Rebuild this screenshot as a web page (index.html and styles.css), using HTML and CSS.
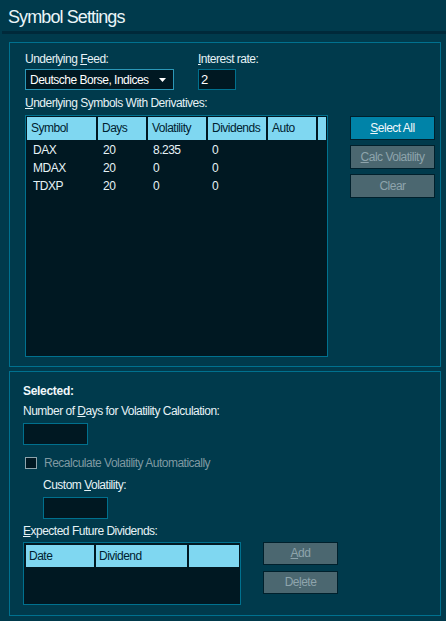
FILE: index.html
```html
<!DOCTYPE html>
<html>
<head>
<meta charset="utf-8">
<link rel="stylesheet" href="styles.css">
</head>
<body>
<div class="title">Symbol Settings</div>
<div class="title-rule"></div>

<section class="panel panel-top">
  <div class="row-top">
    <div class="field feed">
      <label class="lbl">Underlying <u>F</u>eed:</label>
      <div class="select">
        <span>Deutsche Borse, Indices</span>
        <svg class="arrow" width="7" height="4" viewBox="0 0 7 4"><path d="M0 0H7L3.5 4Z" fill="#ffffff"/></svg>
      </div>
    </div>
    <div class="field rate">
      <label class="lbl"><u>I</u>nterest rate:</label>
      <div class="input rate-input">2</div>
    </div>
  </div>
  <label class="lbl lbl-sym"><u>U</u>nderlying Symbols With Derivatives:</label>
  <div class="row-table">
    <div class="grid grid-sym">
      <div class="hdr">
        <div class="hc">Symbol</div>
        <div class="hc">Days</div>
        <div class="hc">Volatility</div>
        <div class="hc">Dividends</div>
        <div class="hc">Auto</div>
        <div class="hc"></div>
      </div>
      <div class="r"><span>DAX</span><span>20</span><span>8.235</span><span>0</span><span></span><span></span></div>
      <div class="r"><span>MDAX</span><span>20</span><span>0</span><span>0</span><span></span><span></span></div>
      <div class="r"><span>TDXP</span><span>20</span><span>0</span><span>0</span><span></span><span></span></div>
    </div>
    <div class="btns">
      <div class="btn btn-primary"><u>S</u>elect All</div>
      <div class="btn btn-off"><u>C</u>alc Volatility</div>
      <div class="btn btn-off">Clear</div>
    </div>
  </div>
</section>

<section class="panel panel-bottom">
  <div class="sel-title">Selected:</div>
  <label class="lbl lbl-days">Number of <u>D</u>ays for Volatility Calculation:</label>
  <div class="input days-input"></div>
  <div class="check-row">
    <span class="check"></span>
    <span class="check-lbl">Recalculate Volatility Automatically</span>
  </div>
  <div class="indent">
    <label class="lbl lbl-custom">Custom <u>V</u>olatility:</label>
    <div class="input custom-input"></div>
  </div>
  <label class="lbl lbl-div"><u>E</u>xpected Future Dividends:</label>
  <div class="row-div">
    <div class="grid grid-div">
      <div class="hdr hdr-div">
        <div class="hc">Date</div>
        <div class="hc">Dividend</div>
        <div class="hc"></div>
      </div>
    </div>
    <div class="btns btns-div">
      <div class="btn btn-off btn-small"><u>A</u>dd</div>
      <div class="btn btn-off btn-small">De<u>l</u>ete</div>
    </div>
  </div>
</section>
</body>
</html>
```

FILE: styles.css
```css
* { box-sizing: border-box; }
html, body { margin: 0; padding: 0; }
body {
  width: 446px;
  height: 621px;
  background: #003a4c;
  color: #e6f2f6;
  font-family: "Liberation Sans", Arial, sans-serif;
  font-size: 12px;
  letter-spacing: -0.5px;
  overflow: hidden;
}
u { text-decoration: underline; text-underline-offset: 1px; }

.title {
  height: 31px;
  padding: 6px 0 0 8px;
  font-size: 18px;
  letter-spacing: -0.9px;
  line-height: 22px;
  color: #eaf5f8;
}
.title-rule {
  margin-left: 2px;
  height: 3px;
  background: #00293a;
}

.panel {
  margin-left: 9px;
  width: 432px;
  border: 1px solid #00718f;
}
.panel-top {
  margin-top: 8px;
  height: 325px;
  padding: 9px 0 0 15px;
}
.panel-bottom {
  margin-top: 4px;
  height: 245px;
  padding: 12px 0 0 13px;
}

.lbl {
  display: block;
  line-height: 14px;
  color: #e6f2f6;
  white-space: nowrap;
}

.row-top { display: flex; gap: 24px; }
.field .lbl { margin-bottom: 3px; }
.select {
  width: 149px;
  height: 21px;
  border: 1px solid #2b98b8;
  background: #001822;
  display: flex;
  align-items: center;
  justify-content: space-between;
  padding: 1px 7px 0 4px;
  color: #ffffff;
  white-space: nowrap;
}
.input {
  height: 22px;
  border: 1px solid #00708e;
  background: #001822;
  color: #ffffff;
}
.rate-input {
  width: 38px;
  height: 21px;
  padding: 2px 0 0 2px;
  line-height: 15px;
  font-size: 13px;
}

.lbl-sym { margin-top: 6px; }

.row-table { display: flex; gap: 22px; margin-top: 5px; }
.grid {
  border: 1px solid #00718f;
  background: #001822;
}
.grid-sym { width: 303px; height: 242px; padding: 1px; }
.hdr {
  display: grid;
  grid-template-columns: 69px 48px 58px 58px 48px 8px;
  column-gap: 2px;
  height: 23px;
}
.hc {
  background: #7fd7f1;
  color: #002230;
  padding-left: 4px;
  line-height: 23px;
  white-space: nowrap;
}
.r {
  display: grid;
  grid-template-columns: 69px 48px 58px 58px 48px 8px;
  column-gap: 2px;
  height: 18px;
  line-height: 18px;
  color: #e6f2f6;
}
.hdr + .r { margin-top: 1px; }
.r span { padding-left: 6px; }
.r span:nth-child(2) { padding-left: 5px; }
.r span:nth-child(3) { padding-left: 5px; }
.r span:nth-child(4) { padding-left: 4px; }

.btns { display: flex; flex-direction: column; gap: 5px; margin-top: 1px; }
.btn {
  width: 85px;
  height: 24px;
  border: 1px solid #00202c;
  text-align: center;
  line-height: 22px;
  white-space: nowrap;
}
.btn-primary { background: #0083a8; color: #f0f8fb; }
.btn-off { background: #4b6770; color: #8ea4ac; }

.sel-title {
  font-weight: bold;
  line-height: 14px;
  letter-spacing: -0.3px;
  color: #f0f8fb;
}
.lbl-days { margin-top: 6px; }
.days-input { width: 65px; margin-top: 5px; }

.check-row {
  display: flex;
  align-items: center;
  gap: 7px;
  margin-top: 12px;
  padding-left: 2px;
  height: 12px;
}
.check {
  width: 12px;
  height: 12px;
  border: 1px solid #8ea4ac;
  background: #001822;
}
.check-lbl { color: #7f99a2; line-height: 14px; }

.indent { padding-left: 20px; margin-top: 9px; }
.custom-input { width: 65px; margin-top: 5px; }

.lbl-div { margin-top: 5px; }
.row-div { display: flex; gap: 22px; margin-top: 4px; }
.grid-div { width: 218px; height: 63px; padding: 2px; }
.hdr-div {
  grid-template-columns: 68px 91px 50px;
  height: 22px;
}
.hdr-div .hc { line-height: 22px; padding-left: 3px; }
.btns-div { margin-top: 0; gap: 6px; }
.btn-small { width: 75px; height: 23px; line-height: 21px; }
```
